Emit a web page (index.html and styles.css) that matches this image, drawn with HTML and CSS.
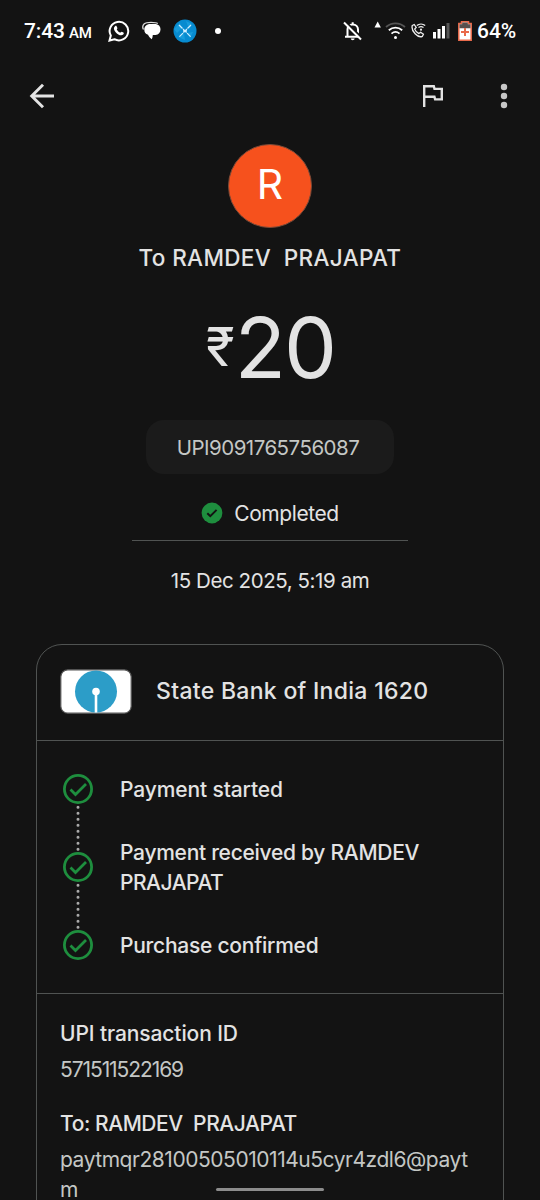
FILE: index.html
```html
<!DOCTYPE html>
<html lang="en">
<head>
<meta charset="utf-8">
<title>Payment details</title>
<link rel="stylesheet" href="styles.css">
</head>
<body>
<div class="screen">
  <header class="status">
    <div class="clock">7:43 <span class="meridiem">AM</span></div>
    <svg class="whatsapp" width="22" height="22" viewBox="0 0 22 22" fill="none" stroke="#fff" stroke-width="2">
      <path d="M1.500 20.500 2.800 15.600A9.300 9.300 0 1 1 6.400 19.200Z"/>
      <path d="M7 6.200c.5-.6 1.300-.6 1.600 0l.8 1.700c.2.5-.7 1.100-.6 1.500.8 1.500 2 2.600 3.400 3.200.5.1 1-1 1.500-.9l1.700.8c.7.4.3 1.600-.2 2.100-1.200 1.100-3.100.8-4.900-.2-2-1.100-3.600-3-4.200-4.900-.4-1.300-.1-2.400.9-3.300z" fill="#fff" stroke="none"/>
    </svg>
    <svg class="chat" width="20" height="20" viewBox="0 0 20 20">
      <path d="M1.500 8.500C.4 6.500.7 4.200 2.300 2.700 3.800 1.400 6 1.300 9 1.300c3.500 0 5.500 0 6.700 1.300" fill="none" stroke="#ddd" stroke-width="1.300"/>
      <path d="M8.500 3h4c4.200 0 6 2.400 6 5.500 0 3-1.900 5.200-5 5.500h-2.700c-.1 1.500-.4 3-1 4.200-1.700-1-3-2.600-3.800-4.400C3.600 13.200 2.300 11.200 2.300 8.500 2.300 5.500 4.300 3 8.500 3z" fill="#fff"/>
    </svg>
    <svg class="blue-app" width="24" height="24" viewBox="0 0 24 24">
      <circle cx="12" cy="12" r="11.500" fill="#078bd0"/>
      <path d="M1 10 7 4l2 5-5 5zM13 2l6 3-3 5zM14 14l6-1-3 6zM5 18l6-4 1 7z" fill="#23a9e4" opacity=".6"/>
      <path d="m6 6 12 12M18 6 6 18M10 12h4" stroke="#d2efff" stroke-width="1.200" stroke-dasharray="5 .7"/>
    </svg>
    <i class="status-dot"></i>
    <svg class="mute" width="20" height="20" viewBox="0 0 20 20" fill="none" stroke="#fff" stroke-width="2">
      <path d="M4.500 16V8.500C4.500 5.600 6.500 3.500 9.700 3.500s5.300 2.100 5.300 5V16M2 15.800h15M9.700 3.500V1.300"/>
      <path d="M7.800 17.500h3.800c0 2.200-3.800 2.200-3.800 0z" fill="#fff" stroke="none"/>
      <path d="m2.700.700 17 17" stroke="#131313" stroke-width="2"/>
      <path d="m1 1.500 17 17"/>
    </svg>
    <svg class="wifi" width="32" height="20" viewBox="0 0 32 20" fill="none" stroke="#fff" stroke-width="1.800">
      <path d="m.5 6.600 3.200-6 3.200 6z" fill="#fff" stroke="none"/>
      <path d="M12 6c5.500-4.900 13.500-4.900 19 0" stroke="#555"/>
      <path d="M14.800 9.200c4-3.500 9.400-3.500 13.400 0M17.500 12.600c2.400-2.100 5.600-2.100 8 0"/>
      <circle cx="21.500" cy="16.500" r="1.500" fill="#fff" stroke="none"/>
    </svg>
    <svg class="wifi-call" width="15" height="15" viewBox="0 0 15 15" fill="none" stroke="#eee" stroke-width="1.300">
      <path d="M1.300 2.500 3.200 1.500l2 3-1.500 1.600c.8 2.300 2.200 3.600 4.200 4.500l1.700-1.300 2.800 2-1 2C7 15.500-.3 8 1.300 2.500z"/>
      <path d="M5.800 2.600c2.400-2 6-2 8.400 0M7.500 4.600c1.600-1.200 3.400-1.200 5 0"/>
      <circle cx="10" cy="6.700" r="1.100" fill="#eee" stroke="none"/>
    </svg>
    <svg class="signal" width="17" height="16" viewBox="0 0 17 16" fill="#fff">
      <path d="M0 9h3v6.500H0zM4.500 6h3v9.500h-3zM9 3h3v12.500H9z"/><path d="M13.500 0h3v15.500h-3z" fill="#555"/>
    </svg>
    <svg class="battery" width="14" height="20" viewBox="0 0 14 20">
      <path d="M.8 2.600h2.700V.800h7v1.800h2.700v16.600H.8z" fill="#fff" stroke="#e96a4b" stroke-width="1.500"/>
      <path d="M1.500 3.300h2.700V1.500h5.600v1.800h2.700v4h-11z" fill="#58504e"/>
      <path d="M7 7v8M3 11h8" stroke="#e96a4b" stroke-width="2"/>
    </svg>
    <span class="percent">64%</span>
  </header>

  <nav class="app-bar">
    <svg class="back" width="26" height="26" viewBox="0 0 26 26" fill="none" stroke="#e3e3e3" stroke-width="2.900"><path d="M25 13H3M14 1.700 2.700 13 14 24.300"/></svg>
    <svg class="flag" width="20" height="22" viewBox="0 0 20 22" fill="none" stroke="#e3e3e3" stroke-width="2.400"><path d="M1.200 22V1.200h9.600l.7 2.700h7.300v10.500h-6.700l-.7-2.700H1.200"/></svg>
    <svg class="more" width="8" height="26" viewBox="0 0 8 26" fill="#c7c7c7"><circle cx="4" cy="4" r="3.200"/><circle cx="4" cy="13" r="3.200"/><circle cx="4" cy="22" r="3.200"/></svg>
  </nav>

  <main>
    <section class="summary">
      <div class="avatar">R</div>
      <h1 class="payee">To RAMDEV&nbsp; PRAJAPAT</h1>
      <div class="amount"><span class="rupee">₹</span><span class="figure">20</span></div>
      <div class="note">UPI9091765756087</div>
      <div class="state">
        <svg width="22" height="22" viewBox="0 0 22 22"><circle cx="11" cy="11" r="10.400" fill="#1e8e3e"/><path d="m6.300 11.200 3 3 6.300-6.300" fill="none" stroke="#131313" stroke-width="2"/></svg>
        <span>Completed</span>
      </div>
      <div class="date">15 Dec 2025, 5:19 am</div>
    </section>

    <section class="card">
      <div class="bank">
        <svg class="bank-logo" width="72" height="45" viewBox="0 0 72 45">
          <rect x=".8" y=".8" width="70.400" height="43.400" rx="7" fill="#fff" stroke="#555" stroke-width="1.200"/>
          <circle cx="36" cy="22.500" r="21" fill="#2c9dc8"/>
          <circle cx="36" cy="22.500" r="3.800" fill="#fff"/>
          <path d="M36 22.500V43.500" stroke="#fff" stroke-width="2.600"/>
        </svg>
        <span class="bank-name">State Bank of India 1620</span>
      </div>
      <div class="steps">
        <svg class="track" width="32" height="188" viewBox="0 0 32 188" fill="none">
          <path d="M16 34.200V79M16 112.200V157" stroke="#aaa" stroke-width="3" stroke-linecap="round" stroke-dasharray="0 6"/>
          <g stroke="#1e8e3e" stroke-width="2.800">
            <circle cx="16" cy="16" r="13.600"/><circle cx="16" cy="94" r="13.600"/><circle cx="16" cy="172" r="13.600"/>
            <path d="m8.500 16.500 5 5L24 11M8.500 94.500l5 5L24 89M8.500 172.500l5 5L24 167"/>
          </g>
        </svg>
        <div class="labels">
          <p class="started">Payment started</p>
          <p class="received">Payment received by RAMDEV<br><span class="surname">PRAJAPAT</span></p>
          <p class="confirmed">Purchase confirmed</p>
        </div>
      </div>
      <dl class="details">
        <dt class="id-label">UPI transaction ID</dt>
        <dd class="id-value">571511522169</dd>
        <dt class="to-label">To: RAMDEV&nbsp; PRAJAPAT</dt>
        <dd class="to-value">paytmqr28100505010114u5cyr4zdl6@payt<br>m</dd>
      </dl>
    </section>
  </main>
  <div class="gesture-bar"></div>
</div>
</body>
</html>
```
FILE: styles.css
```css
* { box-sizing: border-box; }
body { margin: 0; background: #131313; color: #e3e3e3; font-family: Inter, Roboto, sans-serif; }
.screen { position: relative; width: 540px; height: 1200px; overflow: hidden; background: #131313; }
svg { display: block; flex: none; }

.status { display: flex; align-items: center; height: 61px; padding-left: 24px; color: #fff; font: 500 21px/24px Roboto, sans-serif; }
.clock { width: 84px; padding-top: 2px; white-space: nowrap; letter-spacing: -.1px; }
.meridiem { margin-left: -1px; font-size: 15px; letter-spacing: -.3px; }
.chat { margin-left: 12px; }
.blue-app { margin-left: 11px; }
.status-dot { width: 6px; height: 6px; margin-left: 18px; border-radius: 50%; background: #fff; }
.mute { margin-left: 122px; }
.wifi { margin-left: 11px; }
.wifi-call { margin-left: 5px; }
.signal { margin-left: 7px; }
.battery { margin-left: 8px; }
.percent { margin-left: 5px; padding-top: 1px; }

.app-bar { display: flex; align-items: center; height: 70px; padding: 0 32px 0 29px; }
.flag { margin-left: 368px; }
.more { margin-left: 57px; }

.summary { display: flex; flex-direction: column; align-items: center; padding-top: 13px; }
.avatar { width: 84px; height: 84px; border: 1px solid #7b4a38; border-radius: 50%; background: #f6511d; color: #fff; font-size: 41px; line-height: 79px; text-align: center; }
.payee { margin: 15px 0 0; font-weight: 500; font-size: 22.500px; line-height: 30px; letter-spacing: .35px; }
.amount { display: flex; height: 147px; padding-left: 1px; }
.rupee { font-size: 53px; line-height: 148px; }
.figure { font-size: 84px; line-height: 150px; letter-spacing: -2px; }
.note { width: 248px; height: 54px; border-radius: 18px; background: #1b1b1b; color: #c4c7c5; font-size: 20.500px; line-height: 55px; text-align: center; letter-spacing: -.52px; padding-right: 4px; }
.state { display: flex; justify-content: center; align-items: center; gap: 11px; width: 276px; height: 67px; padding-top: 11px; border-bottom: 1px solid #505352; font-size: 21px; letter-spacing: -.42px; }
.state span { padding-top: 2px; }
.date { font-size: 20.500px; line-height: 80px; letter-spacing: -.42px; }

.card { height: 620px; margin: 23px 36px 0; border: 1px solid #505352; border-radius: 26px; }
.bank { display: flex; align-items: center; gap: 24px; height: 96px; padding: 0 23px 2px; border-bottom: 1px solid #505352; font-weight: 500; font-size: 23px; letter-spacing: .3px; }
.bank-name { padding-bottom: 2px; }
.steps { display: flex; height: 253px; padding: 32px 24px 0 25px; border-bottom: 1px solid #505352; font-weight: 500; font-size: 21px; line-height: 30px; }
.labels { margin-left: 26px; white-space: nowrap; }
.labels p { margin: 2px 0 33px; }
.started { letter-spacing: -.12px; }
.received { letter-spacing: -.28px; }
.surname { letter-spacing: -.5px; }
.confirmed { letter-spacing: -.25px; }
.details { margin: 0; padding: 25px 23px 0; font-size: 21px; line-height: 30px; white-space: nowrap; }
.details dt { font-weight: 500; }
.details dd { margin: 6px 0 24px; color: #c4c7c5; }
.id-label { letter-spacing: -.1px; }
.id-value { letter-spacing: -1.08px; }
.to-label { letter-spacing: -.43px; }
.to-value { letter-spacing: -.46px; }
.gesture-bar { position: absolute; left: 216px; top: 1188px; width: 108px; height: 3px; border-radius: 2px; background: #8c8c8c; }
```
